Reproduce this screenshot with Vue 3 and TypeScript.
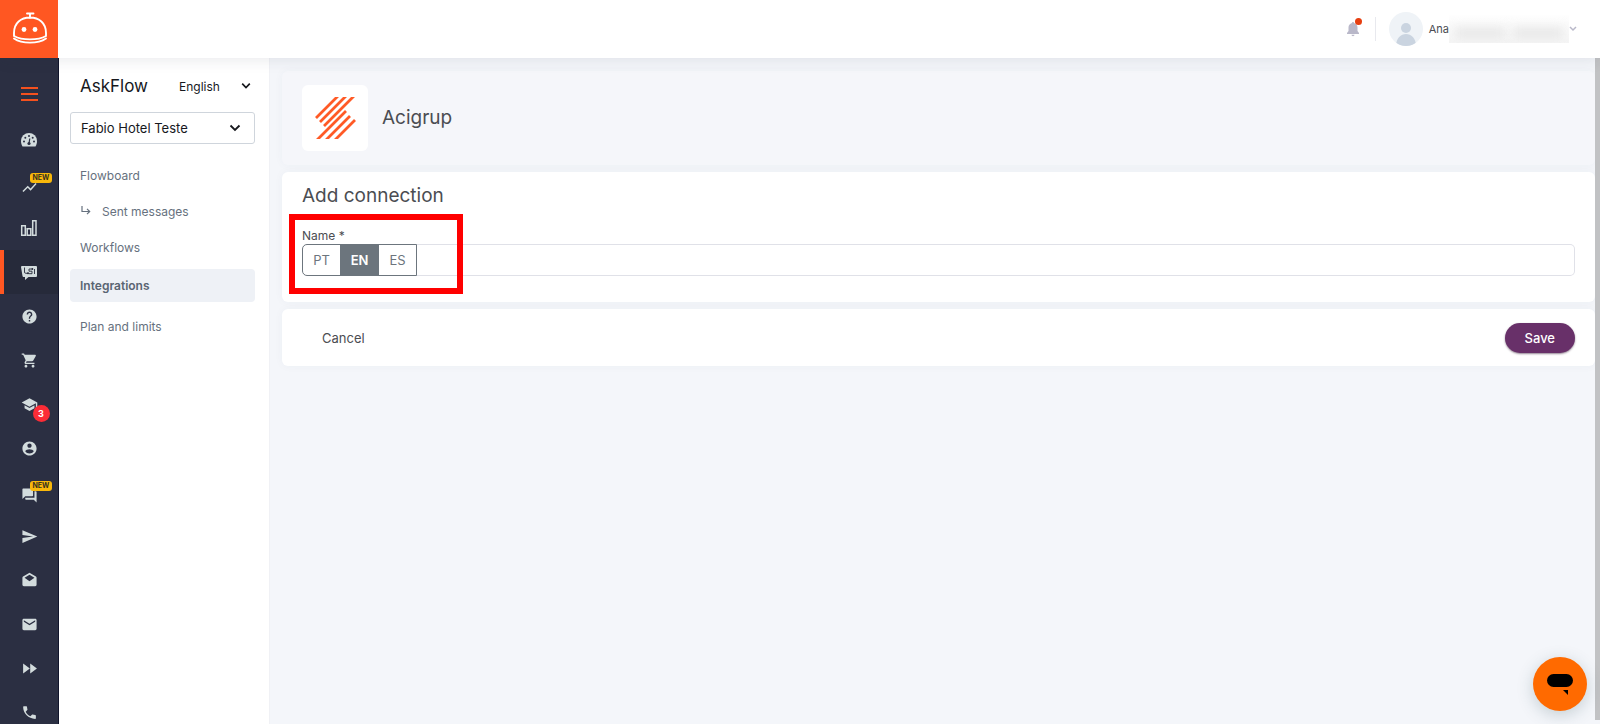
<script setup lang="ts">
import { ref } from 'vue'

interface RailItem {
  id: string
  label: string
  paths: string[]
  tag?: string
  count?: number
  active?: boolean
}

const railItems: RailItem[] = [
  { id: 'dashboard', label: 'Dashboard', paths: [] },
  { id: 'trends', label: 'Trends', tag: 'NEW', paths: ['M3.5 18.5l6-6 4 4L22 6.9 20.6 5.5l-7.1 8-4-4L2 17z'] },
  { id: 'reports', label: 'Reports', paths: [] },
  { id: 'askflow', label: 'AskFlow', paths: [], active: true },
  {
    id: 'help',
    label: 'Help',
    paths: [
      'M12 2C6.5 2 2 6.5 2 12s4.500 10 10 10 10-4.500 10-10S17.500 2 12 2zm1 17h-2v-2h2v2zm2.070-7.750l-.9.920C13.450 12.900 13 13.500 13 15h-2v-.5c0-1.100.450-2.100 1.170-2.830l1.240-1.260c.370-.360.590-.860.590-1.410 0-1.100-.9-2-2-2s-2 .9-2 2H8c0-2.210 1.790-4 4-4s4 1.790 4 4c0 .880-.360 1.680-.930 2.250z',
    ],
  },
  {
    id: 'shop',
    label: 'Shop',
    paths: [
      'M7 18c-1.100 0-1.990.9-1.990 2S5.900 22 7 22s2-.9 2-2-.9-2-2-2zM1 2v2h2l3.600 7.590-1.350 2.450c-.160.280-.250.610-.250.960 0 1.100.9 2 2 2h12v-2H7.420c-.140 0-.250-.110-.250-.250l.030-.120.900-1.630h7.450c.750 0 1.410-.410 1.750-1.030l3.580-6.490c.080-.140.120-.310.120-.480 0-.550-.450-1-1-1H5.210l-.940-2H1zm16 16c-1.100 0-1.990.9-1.990 2s.890 2 1.990 2 2-.9 2-2-.9-2-2-2z',
    ],
  },
  {
    id: 'academy',
    label: 'Academy',
    count: 3,
    paths: ['M5 13.180v4L12 21l7-3.820v-4L12 17l-7-3.820zM12 3L1 9l11 6 9-4.910V17h2V9L12 3z'],
  },
  {
    id: 'account',
    label: 'Account',
    paths: [
      'M12 2C6.480 2 2 6.480 2 12s4.480 10 10 10 10-4.480 10-10S17.520 2 12 2zm0 3c1.660 0 3 1.340 3 3s-1.340 3-3 3-3-1.340-3-3 1.340-3 3-3zm0 14.200c-2.500 0-4.710-1.280-6-3.220.030-1.990 4-3.080 6-3.080 1.990 0 5.970 1.090 6 3.080-1.290 1.940-3.500 3.220-6 3.220z',
    ],
  },
  {
    id: 'forum',
    label: 'Conversations',
    tag: 'NEW',
    paths: [
      'M21 6h-2v9H6v2c0 .550.450 1 1 1h11l4 4V7c0-.550-.450-1-1-1zm-4 6V3c0-.550-.450-1-1-1H3c-.550 0-1 .450-1 1v14l4-4h10c.550 0 1-.450 1-1z',
    ],
  },
  { id: 'send', label: 'Send', paths: ['M2.010 21L23 12 2.010 3 2 10l15 2-15 2z'] },
  {
    id: 'drafts',
    label: 'Campaigns',
    paths: [
      'M21.990 8c0-.720-.370-1.350-.940-1.700L12 1 2.950 6.300C2.380 6.650 2 7.280 2 8v10c0 1.100.9 2 2 2h16c1.100 0 2-.9 2-2l-.010-10zM12 13L5 8.200 12 4l7 4.200L12 13z',
    ],
  },
  {
    id: 'mail',
    label: 'Mail',
    paths: ['M20 4H4c-1.100 0-1.990.9-1.990 2L2 18c0 1.100.9 2 2 2h16c1.100 0 2-.9 2-2V6c0-1.100-.9-2-2-2zm0 4l-8 5-8-5V6l8 5 8-5v2z'],
  },
  { id: 'forward', label: 'Automations', paths: ['M3 19l9.500-7L3 5v14zm10-14v14l9.500-7L13 5z'] },
  {
    id: 'phone',
    label: 'Phone',
    paths: [
      'M6.620 10.790c1.440 2.830 3.760 5.140 6.590 6.590l2.200-2.200c.270-.270.670-.360 1.020-.240 1.120.370 2.330.570 3.570.570.550 0 1 .450 1 1V20c0 .550-.450 1-1 1-9.390 0-17-7.610-17-17 0-.550.450-1 1-1h3.500c.550 0 1 .450 1 1 0 1.250.2 2.450.570 3.570.110.350.030.740-.250 1.020l-2.200 2.200z',
    ],
  },
]

const language = ref('English')
const hotel = ref('Fabio Hotel Teste')
const name = ref('')
const locales = ['PT', 'EN', 'ES']
const locale = ref('EN')
</script>

<template>
  <div class="app">
    <header class="topbar">
      <a class="logo" href="#" aria-label="Home">
        <svg width="36" height="34" viewBox="0 0 36 34" fill="none" stroke="#fff" stroke-width="1.900" stroke-linecap="round">
          <path d="M15 2.500h6.500M18 3v4M2 25V22C2 12 9 6.500 18 6.500s16 5.500 16 15.500v3C26 29.500 10 29.500 2 25zM2 27.500c8 5.500 24 5.500 32 0" />
          <circle cx="12" cy="18.500" r="2.400" fill="#fff" stroke="none" />
          <circle cx="23" cy="18.500" r="2.400" fill="#fff" stroke="none" />
        </svg>
      </a>
      <button class="bell" type="button" aria-label="Notifications">
        <svg width="14" height="16" viewBox="0 0 14 16" fill="#b9b8c9">
          <path d="M7 1c-.7 0-1 .5-1 1-2.300.6-3.500 2.300-3.500 4.500V10L1 12v1h12v-1l-1.500-2V6.500C11.500 4.300 10.300 2.600 8 2c0-.5-.3-1-1-1zM5.500 13.800h3c0 .8-.7 1.400-1.500 1.400s-1.500-.6-1.500-1.400z" />
        </svg>
        <span class="bell-dot"></span>
      </button>
      <span class="divider"></span>
      <button class="user" type="button">
        <svg width="34" height="34" viewBox="0 0 34 34">
          <defs><clipPath id="avatar"><circle cx="17" cy="17" r="17" /></clipPath></defs>
          <g clip-path="url(#avatar)">
            <path d="M0 0h34v34H0z" fill="#eff3f7" />
            <circle cx="17" cy="16" r="5" fill="#cad4e0" />
            <path d="M7 34c0-16 20-16 20 0z" fill="#cad4e0" />
          </g>
        </svg>
        <span class="user-name">Ana</span>
        <span class="masked"><i></i><i></i></span>
        <svg width="8" height="6" viewBox="0 0 8 6" fill="none" stroke="#b9b8c9" stroke-width="1.500"><path d="M1 1l3 3 3-3" /></svg>
      </button>
    </header>

    <div class="body">
      <nav class="rail" aria-label="Main">
        <button class="burger" type="button" aria-label="Menu"><i></i><i></i><i></i></button>
        <a v-for="item in railItems" :key="item.id" href="#" class="rail-item" :class="{ active: item.active, tagged: item.tag }" :aria-label="item.label">
          <span class="rail-icon">
            <svg v-if="item.id === 'dashboard'" width="18" height="16" viewBox="0 0 18 16">
              <path d="M9 1a8 8 0 0 0-8 8c0 2 .5 3.800 1.500 5.500h13C16.500 12.800 17 11 17 9a8 8 0 0 0-8-8z" fill="#d3dcdd" />
              <g fill="#2b2f42"><circle cx="4" cy="9.500" r="1" /><circle cx="5.300" cy="5.700" r="1" /><circle cx="9" cy="4" r="1" /><circle cx="12.700" cy="5.700" r="1" /><circle cx="14" cy="9.500" r="1" /><circle cx="9" cy="11.500" r="1.600" /></g>
              <path d="M9 11.500l.8-5" stroke="#2b2f42" stroke-width="1.200" />
            </svg>
            <svg v-else-if="item.id === 'reports'" width="18" height="18" viewBox="0 0 18 18" fill="none" stroke="#d3dcdd" stroke-width="1.500">
              <path d="M1.700 6.700h3.600v9.600H1.700zM7.200 9.700h3.600v6.600H7.200zM12.700 1.700h3.300v14.600h-3.300z" />
            </svg>
            <svg v-else-if="item.id === 'askflow'" width="18" height="16" viewBox="0 0 18 16">
              <path d="M2 2h14q1 0 1 1v9q0 1-1 1H8.500l-3.500 3V13H3.500q-.8 0-1-1L1 3q0-1 1-1z" fill="#d3dcdd" />
              <path d="M4.500 3.500v4.500q0 1.300 1.300 1.300h2.500M12.500 5H9v2.200h3v2.500H9M14.500 10V5" fill="none" stroke="#262a3a" stroke-width=".9" />
              <circle cx="8" cy="9.300" r="1" fill="#262a3a" /><circle cx="12.400" cy="5" r=".9" fill="#262a3a" />
            </svg>
            <svg v-else width="17" height="17" viewBox="0 0 24 24" fill="#d3dcdd"><path v-for="d in item.paths" :key="d" :d="d" /></svg>
            <span v-if="item.tag" class="tag">{{ item.tag }}</span>
            <span v-if="item.count" class="count">{{ item.count }}</span>
          </span>
        </a>
      </nav>

      <aside class="side">
        <div class="side-head">
          <h1>AskFlow</h1>
          <label class="pick lang">
            <select v-model="language" aria-label="Language"><option>English</option></select>
            <svg width="10" height="7" viewBox="0 0 10 7" fill="none" stroke="#16181d" stroke-width="1.700"><path d="M1.200 1.200L5 5l3.800-3.800" /></svg>
          </label>
        </div>
        <label class="pick hotel">
          <select v-model="hotel" aria-label="Hotel"><option>Fabio Hotel Teste</option></select>
          <svg width="12" height="8" viewBox="0 0 12 8" fill="none" stroke="#16181d" stroke-width="1.800"><path d="M1.500 1.500L6 6l4.500-4.500" /></svg>
        </label>
        <nav class="menu" aria-label="AskFlow">
          <a href="#">Flowboard</a>
          <a href="#" class="sub">
            <svg width="10" height="10" viewBox="0 0 10 10" fill="none" stroke="#66717e" stroke-width="1.200"><path d="M1 0v5.500h7.500M6 2.800l2.700 2.700L6 8.200" /></svg>
            Sent messages
          </a>
          <a href="#">Workflows</a>
          <a href="#" class="current" aria-current="page">Integrations</a>
          <a href="#">Plan and limits</a>
        </nav>
      </aside>

      <main class="main">
        <section class="card intro">
          <span class="tile">
            <svg width="42" height="44" viewBox="0 0 42 44">
              <defs><clipPath id="mark"><path d="M0 1h42v42H0z" /></clipPath></defs>
              <g clip-path="url(#mark)" stroke="#ff5a26" stroke-width="2.800">
                <path d="M2 22L25 -1M6 26L33 -1M10 30L41 -1M32 15L2 45M36 20L11 45M41 24L20 45" />
              </g>
            </svg>
          </span>
          <h2>Acigrup</h2>
        </section>

        <form id="connection" class="card connection" @submit.prevent>
          <h2>Add connection</h2>
          <div class="field">
            <label for="conn-name">Name *</label>
            <div class="group">
              <button v-for="code in locales" :key="code" type="button" :class="{ on: code === locale }" @click="locale = code">{{ code }}</button>
              <input id="conn-name" v-model="name" type="text" />
            </div>
            <span class="highlight"></span>
          </div>
        </form>

        <footer class="card actions">
          <button class="cancel" type="button">Cancel</button>
          <button class="save" type="submit" form="connection">Save</button>
        </footer>
      </main>
      <div class="scroll"></div>
    </div>

    <button class="chat" type="button" aria-label="Open chat">
      <svg width="28" height="24" viewBox="0 0 28 24"><rect x="1" y="2" width="26" height="13" rx="6.500" /><path d="M17 18h5v5z" /></svg>
    </button>
  </div>
</template>

<style>
body {
  margin: 0;
}
</style>

<style scoped>
* {
  box-sizing: border-box;
}
.app {
  height: 100vh;
  display: flex;
  flex-direction: column;
  overflow: hidden;
  background: #f4f6fa;
  color: #4b4d52;
  font-family: Inter, 'Liberation Sans', sans-serif;
  font-size: 13px;
}
button,
input,
select {
  font: inherit;
  color: inherit;
  background: none;
  border: 0;
  padding: 0;
  margin: 0;
}
a {
  color: inherit;
  text-decoration: none;
}
h1,
h2 {
  margin: 0;
  font-weight: 400;
}
svg {
  display: block;
  flex: none;
}
.topbar {
  position: relative;
  z-index: 2;
  flex: none;
  height: 58px;
  display: flex;
  align-items: center;
  padding-right: 23px;
  background: #fff;
  box-shadow: 0 2px 14px rgba(40, 45, 70, 0.1);
}
.logo {
  width: 58px;
  height: 58px;
  display: flex;
  align-items: center;
  justify-content: center;
  padding: 0 0 2px 2px;
  margin-right: auto;
  background: #ff5722;
}
.bell {
  position: relative;
}
.bell-dot {
  position: absolute;
  top: -3px;
  right: -2px;
  width: 7px;
  height: 7px;
  border-radius: 50%;
  background: #e63e10;
}
.divider {
  width: 1px;
  height: 24px;
  margin: 0 13px 0 15px;
  background: #e8e9ee;
}
.user {
  display: flex;
  align-items: center;
}
.user-name {
  margin-left: 6px;
  font-size: 11px;
}
.masked {
  display: flex;
  align-items: center;
  width: 120px;
  height: 28px;
  padding: 8px 2px 0;
  overflow: hidden;
  background: linear-gradient(#fefefe, #f5f5f5);
}
.masked i {
  flex: 1;
  height: 12px;
  margin: 0 4px;
  background: #e9e9e9;
  filter: blur(5px);
}
.body {
  flex: 1;
  min-height: 0;
  display: flex;
}
.rail {
  flex: none;
  width: 59px;
  display: flex;
  flex-direction: column;
  background: #2b2f42;
  border-right: 1px solid #10142b;
  overflow: hidden;
}
.burger {
  flex: none;
  height: 60px;
  display: flex;
  flex-direction: column;
  align-items: center;
  justify-content: center;
  gap: 4px;
  padding-top: 12px;
}
.burger i {
  width: 17px;
  height: 2px;
  background: #f4511e;
}
.rail-item {
  flex: none;
  height: 44px;
  display: flex;
  align-items: center;
  justify-content: center;
  border-left: 4px solid transparent;
  padding-right: 4px;
}
.rail-item.active {
  background: #262a3a;
  border-color: #ff5722;
}
.rail-item.tagged {
  padding-top: 6px;
}
.rail-icon {
  position: relative;
}
.tag {
  position: absolute;
  top: -6px;
  left: 9px;
  padding: 0 3px;
  border-radius: 3px;
  background: #f9b80b;
  color: #33301f;
  font-size: 7px;
  font-weight: 700;
  line-height: 10px;
}
.count {
  position: absolute;
  top: 9px;
  left: 12px;
  width: 17px;
  border-radius: 50%;
  background: #fb2c36;
  color: #fff;
  font-size: 9px;
  font-weight: 700;
  line-height: 17px;
  text-align: center;
}
.side {
  flex: none;
  width: 211px;
  padding: 16px 14px 0 11px;
  background: #fff;
  border-right: 1px solid #f0f1f5;
}
.side-head {
  display: flex;
  align-items: center;
  justify-content: space-between;
  height: 24px;
  padding: 0 4px 0 10px;
}
h1 {
  color: #16181d;
  font-size: 17px;
}
.pick {
  position: relative;
  display: block;
  color: #16181d;
}
.pick select {
  appearance: none;
  width: 100%;
  outline: none;
}
.pick svg {
  position: absolute;
  top: 50%;
  right: 0;
  transform: translateY(-50%);
  pointer-events: none;
}
.lang {
  width: 72px;
  font-size: 12px;
}
.hotel {
  margin-top: 14px;
}
.hotel select {
  height: 32px;
  padding: 0 10px;
  border: 1px solid #cfd5dc;
  border-radius: 3px;
}
.hotel svg {
  right: 14px;
}
.menu {
  display: flex;
  flex-direction: column;
  margin-top: 13px;
  color: #66717e;
  font-size: 12px;
}
.menu a {
  display: flex;
  align-items: center;
  height: 36px;
  padding: 0 10px;
}
.menu .sub svg {
  margin: 0 11px 0 1px;
}
.menu .current {
  height: 33px;
  margin: 4px 0 6px;
  border-radius: 4px;
  background: #eef1f6;
  color: #5a6572;
  font-weight: 600;
}
.main {
  flex: 1;
  min-width: 0;
  display: flex;
  flex-direction: column;
  gap: 7px;
  padding: 13px 0 0 12px;
}
.card {
  border-radius: 6px;
  background: #fff;
  padding: 0 20px;
  box-shadow: 0 0 10px rgba(60, 70, 110, 0.04);
}
.intro {
  display: flex;
  align-items: center;
  gap: 14px;
  height: 94px;
  background: #f5f6fa;
}
.tile {
  display: flex;
  align-items: center;
  justify-content: center;
  width: 66px;
  height: 66px;
  border-radius: 6px;
  background: #fff;
}
h2 {
  font-size: 19px;
  line-height: 24px;
}
.connection {
  padding-top: 12px;
  padding-bottom: 26px;
}
.field {
  position: relative;
  margin-top: 20px;
}
.field label {
  display: block;
  font-size: 12px;
  line-height: 16px;
}
.group {
  display: flex;
  height: 32px;
}
.group button {
  width: 39px;
  margin-right: -1px;
  border: 1px solid #6c757d;
  color: #6c757d;
}
.group button:first-child {
  border-radius: 5px 0 0 5px;
}
.group .on {
  background: #6c757d;
  color: #fff;
  font-weight: 600;
}
.group input {
  flex: 1;
  min-width: 0;
  padding: 0 12px;
  border: 1px solid #e0e1e8;
  border-left-color: #6c757d;
  border-radius: 0 5px 5px 0;
}
.highlight {
  position: absolute;
  top: -14px;
  left: -13px;
  width: 174px;
  height: 80px;
  border: 6px solid #f00;
  pointer-events: none;
}
.actions {
  display: flex;
  align-items: center;
  justify-content: space-between;
  height: 57px;
}
.cancel {
  padding: 0 20px;
}
.save {
  height: 30px;
  padding: 0 20px;
  border-radius: 16px;
  background: #683069;
  color: #fff;
  font-weight: 500;
  box-shadow: 0 1px 2px rgba(40, 10, 40, 0.5);
}
.scroll {
  flex: none;
  width: 5px;
  margin-bottom: 4px;
  background: #c1c2c4;
}
.chat {
  position: fixed;
  right: 13px;
  bottom: 13px;
  display: flex;
  align-items: center;
  justify-content: center;
  width: 54px;
  height: 54px;
  border-radius: 50%;
  background: #ff6a00;
  box-shadow: 0 4px 16px rgba(60, 90, 100, 0.25);
}
</style>
